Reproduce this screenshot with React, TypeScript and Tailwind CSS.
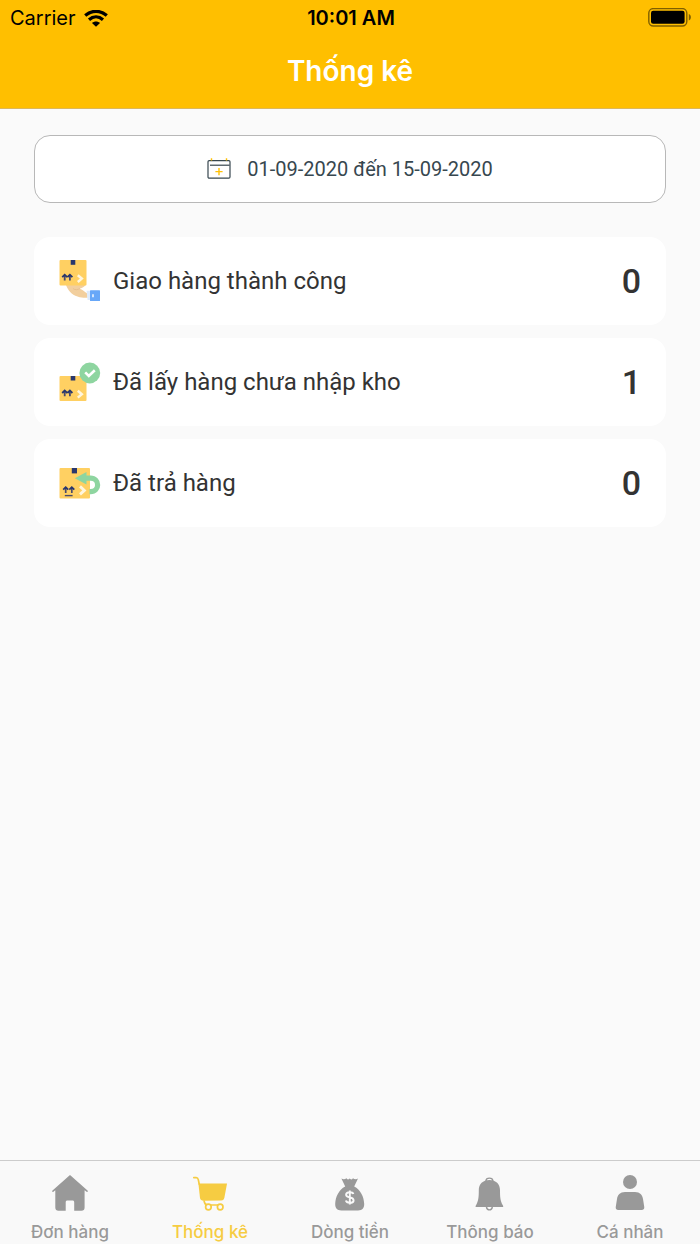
import React, { useState } from 'react';

type IconProps = { className?: string };

const WifiIcon = ({ className }: IconProps) => (
  <svg viewBox="0 0 24 17" className={className} fill="none" stroke="currentColor" strokeWidth={3.2} aria-hidden="true">
    <path d="M1.2 5.5C7.6 -0.1 16.4 -0.1 22.8 5.5" />
    <path d="M5 9.8C9.2 6 14.8 6 19 9.8" />
    <path d="M12 16.8L8 13C10.4 11 13.6 11 16 13Z" fill="currentColor" stroke="none" />
  </svg>
);

const BatteryIcon = ({ className }: IconProps) => (
  <svg viewBox="0 0 44 20" className={className} aria-hidden="true">
    <rect x="0.8" y="0.6" width="38" height="17.4" rx="4.5" fill="none" stroke="#000" strokeOpacity={0.5} strokeWidth={1.4} />
    <rect x="3" y="2.8" width="33.6" height="13" rx="2.2" fill="#000" />
    <path d="M40.8 6C43.6 6.9 43.6 11.7 40.8 12.6Z" fill="#000" fillOpacity={0.5} />
  </svg>
);

const CalendarIcon = ({ className }: IconProps) => (
  <svg viewBox="0 0 24 22" className={className} fill="none" aria-hidden="true">
    <rect x="1" y="2.6" width="22" height="17.6" rx="1.2" stroke="#37474f" strokeWidth={1.2} />
    <path d="M3 7.2H22.6" stroke="#37474f" strokeWidth={1.2} />
    <path d="M4.5 0.2V2.4M19.5 0.2V2.4" stroke="#ffc107" strokeWidth={1.4} />
    <path d="M12 10V17.2M8.4 13.6H15.6" stroke="#ffc107" strokeWidth={1.4} />
  </svg>
);

const DeliveredIcon = ({ className }: IconProps) => (
  <svg viewBox="0 0 42 42" className={className} fill="none" aria-hidden="true">
    <path d="M7 25C9 30.5 12.5 34.5 18.5 36.5C22.5 37.8 25 38 28.5 37.8V33.6C25.5 32 23.5 29.2 20.5 28.8C22.5 28.2 25 27.2 26.5 25Z" fill="#f2cf9e" />
    <path d="M14 28.6C16.5 30.4 18.5 29.6 21 28.6" stroke="#e3bb8c" strokeWidth={0.8} />
    <rect x="0.5" y="0" width="27" height="25.6" rx="1" fill="#ffd062" />
    <path d="M11.7 0H16.3V4.8H11.7Z" fill="#29376d" />
    <path d="M5.7 20.6V15M10.9 20.6V15" stroke="#4a4a6b" strokeWidth={1.8} />
    <path d="M3.2 17.2L5.7 14.8L8.2 17.2M8.4 17.2L10.9 14.8L13.4 17.2" stroke="#29376d" strokeWidth={1.8} />
    <path d="M18.8 15.2L22.8 18.6L18.8 22" stroke="#fff6df" strokeWidth={2.5} />
    <path d="M27.6 30.8H31V40H28.6Z" fill="#ddebfd" />
    <rect x="31" y="30.2" width="10" height="10.8" rx="0.5" fill="#67a7f8" />
    <path d="M34 34.2V37.2" stroke="#fff" strokeWidth={1.4} />
  </svg>
);

const PickedIcon = ({ className }: IconProps) => (
  <svg viewBox="0 0 42 42" className={className} fill="none" aria-hidden="true">
    <rect x="0.5" y="15" width="27" height="25" rx="1" fill="#ffd062" />
    <path d="M11.7 15H16.3V19.5H11.7Z" fill="#29376d" />
    <path d="M5.7 35.2V30M10.9 35.2V30" stroke="#4a4a6b" strokeWidth={1.8} />
    <path d="M3.2 32L5.7 29.6L8.2 32M8.4 32L10.9 29.6L13.4 32" stroke="#29376d" strokeWidth={1.8} />
    <path d="M18.8 29.8L22.8 33.2L18.8 36.6" stroke="#fff6df" strokeWidth={2.5} />
    <circle cx="30.8" cy="12" r="10.4" fill="#8ed5a0" />
    <path d="M26.2 11.4L29.8 15L35.8 9.2" stroke="#fff" strokeWidth={2.6} />
  </svg>
);

const ReturnedIcon = ({ className }: IconProps) => (
  <svg viewBox="0 0 42 42" className={className} fill="none" aria-hidden="true">
    <rect x="0.5" y="6" width="30.5" height="30.5" rx="1" fill="#ffd062" />
    <path d="M12.8 6H18V11.4H12.8Z" fill="#29376d" />
    <path d="M6.7 31V25.4M12.8 31V25.4" stroke="#4a4a6b" strokeWidth={1.7} />
    <path d="M4.2 27.6L6.7 25.1L9.2 27.6M10.3 27.6L12.8 25.1L15.3 27.6" stroke="#29376d" strokeWidth={1.7} />
    <path d="M5.8 33.6H13.6" stroke="#4a4a6b" strokeWidth={1.4} />
    <path d="M21 24.4L25.4 28.4L21 32.4" stroke="#fff6df" strokeWidth={2.8} />
    <path d="M23 16.2H31.5C41 16.2 41 29.6 31.5 29.6H30.5" stroke="#8ed5a0" strokeWidth={5.2} />
    <path d="M15.8 16.2L27.5 10V22.4Z" fill="#8ed5a0" />
  </svg>
);

const HomeIcon = ({ className }: IconProps) => (
  <svg viewBox="0 0 36 36" className={className} fill="currentColor" aria-hidden="true">
    <path d="M18 0L35.5 15.6C36.2 16.4 35.6 17.4 34.6 16.8L32.6 15.2V32.5C32.6 34.6 31.4 35.8 29.4 35.8H22.2V27.5C22.2 26.2 21.6 25.6 20.3 25.6H15.6C14.3 25.6 13.7 26.2 13.7 27.5V35.8H6.5C4.5 35.8 3.3 34.6 3.3 32.5V15.2L1.4 16.8C0.4 17.4 -0.2 16.4 0.5 15.6Z" />
  </svg>
);

const CartIcon = ({ className }: IconProps) => (
  <svg viewBox="0 0 36 36" className={className} fill="none" stroke="currentColor" aria-hidden="true">
    <path d="M1.8 2.6H4.2C5.4 2.6 6 3.4 6.3 4.6L7.2 9" strokeWidth={1.7} strokeLinecap="round" />
    <path d="M6.4 8.6H35L32.4 22.4C32 24.4 31.2 25.3 29.2 25.4L11.4 25.7C9.6 25.7 8.4 25 8 23Z" fill="currentColor" stroke="none" />
    <path d="M12 25.5C12.5 28.5 13.5 30 15.5 30H29" strokeWidth={1.7} />
    <circle cx="16.4" cy="32" r="2.8" strokeWidth={1.7} fill="#f9f9f9" />
    <circle cx="28.2" cy="32" r="2.8" strokeWidth={1.7} fill="#f9f9f9" />
  </svg>
);

const MoneyBagIcon = ({ className }: IconProps) => (
  <svg viewBox="0 0 36 36" className={className} aria-hidden="true">
    <path d="M9.4 3.6C11.6 4.8 13.2 4.2 14.4 3.2C15.8 4.8 16.8 4.6 17.6 3.6C18.6 4.6 19.8 4.8 21 3.2C22.2 4.2 24 4.8 26 3.6L22.2 11.6C28.4 14.8 32 21.6 32.2 29C32.2 33.2 30.4 35.4 26 35.4H9.4C5 35.4 3.2 33.2 3.2 29C3.4 21.6 7 14.8 13.2 11.6Z" fill="currentColor" />
    <path d="M21.4 19C20.8 17.5 19.5 17.2 17.8 17.2C15.4 17.2 14.1 18.1 14.1 19.8C14.1 21.6 15.6 22 17.8 22.4C20.2 22.8 21.6 23.6 21.6 25.4C21.6 27 20.2 27.8 17.8 27.8C15.8 27.8 14.3 27.2 13.9 25.6M17.8 15.4V29.6" fill="none" stroke="#f9f9f9" strokeWidth={1.9} />
  </svg>
);

const BellIcon = ({ className }: IconProps) => (
  <svg viewBox="0 0 36 36" className={className} aria-hidden="true">
    <path d="M17.4 5C24 5 28 9.2 28 15C28 22.5 28.4 26 30.8 30.2C31.6 31.6 31.4 32 30 32H4.8C3.4 32 3.2 31.6 4 30.2C6.4 26 6.8 22.5 6.8 15C6.8 9.2 10.8 5 17.4 5Z" fill="currentColor" />
    <path d="M13.9 6C14.2 2.2 20.6 2.2 20.9 6M14.4 32C15.2 35.8 19.6 35.8 20.4 32" fill="none" stroke="currentColor" strokeWidth={1.4} />
  </svg>
);

const UserIcon = ({ className }: IconProps) => (
  <svg viewBox="0 0 36 36" className={className} fill="currentColor" aria-hidden="true">
    <circle cx="18" cy="7" r="7" />
    <path d="M13 17H23C28 17 30.4 20 31 24L32.2 31.6C32.6 34 31.8 35 29.6 35H6.4C4.2 35 3.4 34 3.8 31.6L5 24C5.6 20 8 17 13 17Z" />
  </svg>
);

const stats = [
  { label: 'Giao hàng thành công', value: 0, Icon: DeliveredIcon },
  { label: 'Đã lấy hàng chưa nhập kho', value: 1, Icon: PickedIcon },
  { label: 'Đã trả hàng', value: 0, Icon: ReturnedIcon },
];

const tabs = [
  { id: 'orders', label: 'Đơn hàng', Icon: HomeIcon },
  { id: 'stats', label: 'Thống kê', Icon: CartIcon },
  { id: 'cash', label: 'Dòng tiền', Icon: MoneyBagIcon },
  { id: 'notifications', label: 'Thông báo', Icon: BellIcon },
  { id: 'profile', label: 'Cá nhân', Icon: UserIcon },
];

const App = () => {
  const [activeTab, setActiveTab] = useState('stats');

  return (
    <div className="min-h-screen flex flex-col bg-[#fafafa] font-['Roboto',sans-serif] text-[#333333]">
      <header className="bg-[#ffbf00] border-b border-[#dcb75a] font-['Inter',sans-serif]">
        <div className="grid grid-cols-3 items-center h-9 pl-[10px] pr-2 text-black">
          <div className="flex items-center gap-2 text-xl">
            <span>Carrier</span>
            <WifiIcon className="w-6 h-[17px]" />
          </div>
          <div className="text-center text-xl font-semibold">10:01 AM</div>
          <BatteryIcon className="w-11 h-5 justify-self-end" />
        </div>
        <h1 className="h-[72px] text-center text-[28px] leading-[70px] font-semibold text-white">Thống kê</h1>
      </header>

      <main className="flex-1 px-[34px] pt-[26px] pb-8">
        <button className="w-full h-[68px] flex items-center justify-center gap-4 bg-white border border-[#b8b8b8] rounded-2xl text-xl text-[#37474f]">
          <CalendarIcon className="w-6 h-[22px]" />
          01-09-2020 đến 15-09-2020
        </button>

        <ul className="mt-[34px] flex flex-col gap-[13px]">
          {stats.map(({ label, value, Icon }) => (
            <li key={label} className="h-[88px] flex items-center px-[25px] bg-white rounded-2xl">
              <Icon className="w-[42px] h-[42px]" />
              <span className="ml-3 flex-1 text-2xl">{label}</span>
              <span className="text-[34px] font-medium">{value}</span>
            </li>
          ))}
        </ul>
      </main>

      <nav className="h-[84px] grid grid-cols-5 bg-[#f9f9f9] border-t border-[#cccccc] font-['Inter',sans-serif]">
        {tabs.map(({ id, label, Icon }) => (
          <button
            key={id}
            onClick={() => setActiveTab(id)}
            className={`flex flex-col items-center pt-[14px] gap-[9px] text-[17px] leading-6 font-medium ${
              activeTab === id ? 'text-[#f6cc42]' : 'text-[#999999]'
            }`}
          >
            <Icon className="w-9 h-9" />
            {label}
          </button>
        ))}
      </nav>
    </div>
  );
};

export default App;
